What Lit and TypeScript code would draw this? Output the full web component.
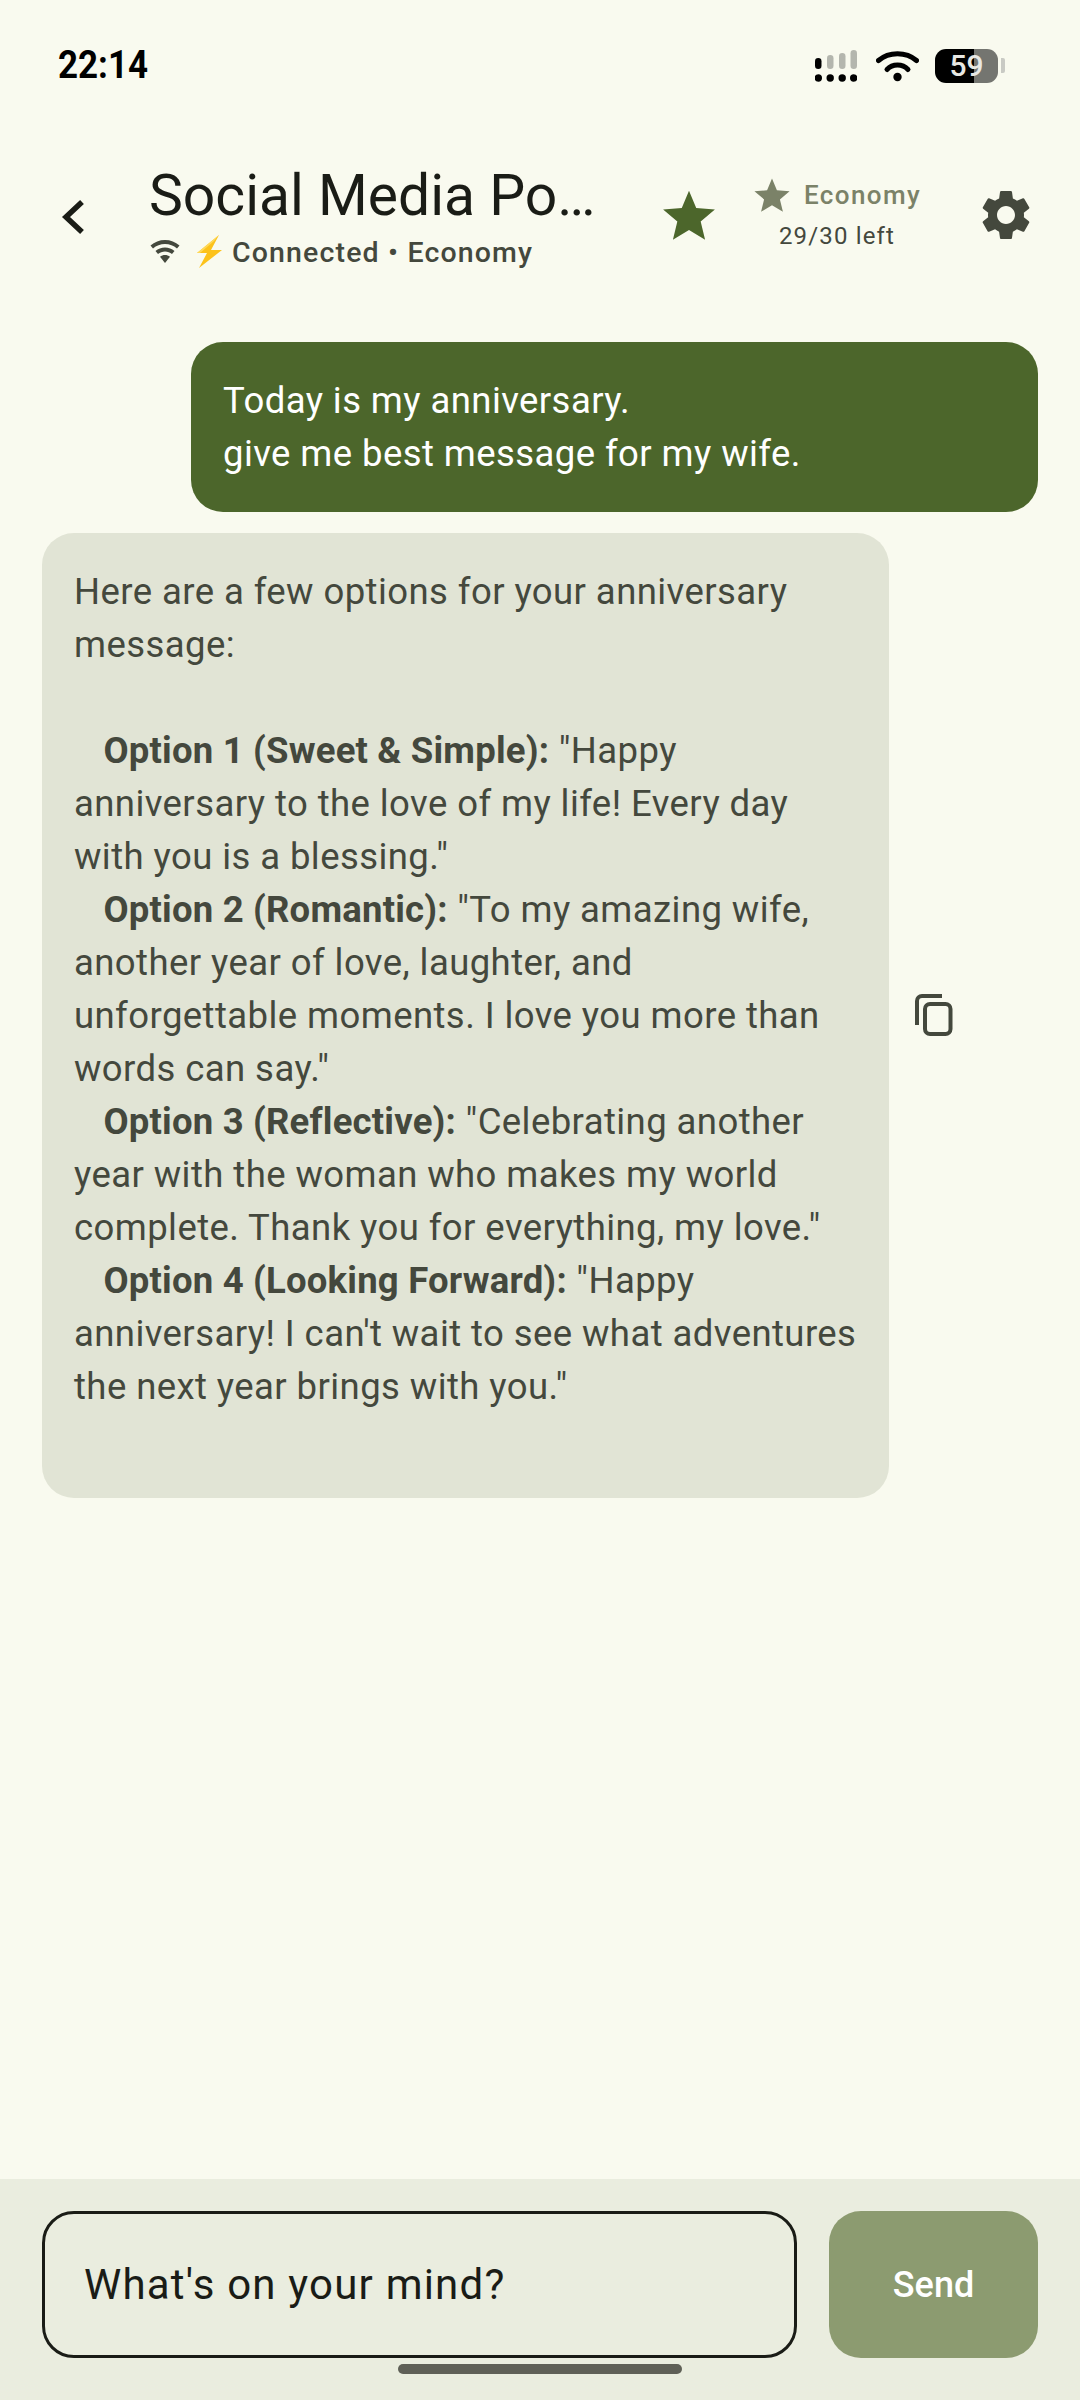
import { html, css, LitElement } from 'lit';
import { customElement, state } from 'lit/decorators.js';

const STAR = 'M12 1.600l3.100 7.400 8 .6-6.100 5.200 1.900 7.800L12 18.400 5.100 22.600 7 14.800.9 9.600l8-.6z';

@customElement('app-root')
export class AppRoot extends LitElement {
  static styles = css`
  :host {
    display: flex;
    flex-direction: column;
    width: 1080px;
    height: 2400px;
    background: #f9faef;
    color: #1a1c16;
    font-family: Roboto, "Liberation Sans", sans-serif;
    overflow: hidden;
  }

  .status {
    display: flex;
    align-items: center;
    height: 128px;
    padding: 0 75px 0 58px;
    box-sizing: border-box;
  }

  .time {
    padding-top: 2px;
    font-size: 38px;
    font-weight: 700;
    color: #000;
    transform: scaleX(.92);
    transform-origin: left center;
    flex: 1;
  }

  .status-icons { display: flex; align-items: center; margin-top: 3px; }
  .signal { width: 42px; height: 32px; margin-right: 19px; }
  .wifi { width: 43px; height: 32px; margin-right: 16px; }

  .battery {
    display: flex;
    align-items: center;
    justify-content: center;
    width: 63px;
    height: 34px;
    border-radius: 11px;
    background: linear-gradient(90deg, #000 0 39px, #747570 39px);
    color: #e8e8e4;
    font-size: 30px;
    font-weight: 500;
    margin-right: 3px;
  }

  .nub { width: 4px; height: 15px; border-radius: 0 2px 2px 0; background: #c9cac4; }

  .header {
    display: flex;
    align-items: center;
    height: 108px;
    margin-top: 33px;
    padding-left: 60px;
  }

  .back { width: 28px; height: 36px; margin: 3px 61px 0 0; }

  .titles { width: 453px; margin: 3px 59px 0 0; }

  .title {
    font-size: 57px;
    line-height: 68px;
    white-space: nowrap;
  }

  .subtitle {
    display: flex;
    align-items: center;
    height: 38px;
    margin-top: 3px;
    padding-left: 1px;
    color: #44483d;
    font-size: 28.5px;
    font-weight: 500;
    letter-spacing: 1.15px;
    white-space: nowrap;
  }

  .subtitle svg:first-child { width: 30px; height: 24px; margin-right: 16px; }
  .bolt { width: 28px; height: 34px; margin-right: 8px; }

  .big-star { width: 56px; height: 56px; margin-right: 35px; }

  .quota {
    display: flex;
    flex-direction: column;
    align-items: center;
    width: 170px;
    margin-right: 54px;
  }

  .tier {
    display: flex;
    align-items: center;
    gap: 13px;
    margin-top: -5px;
    color: #7b8268;
    font-size: 26px;
    font-weight: 500;
    letter-spacing: 1.4px;
  }

  .tier svg { width: 38px; height: 38px; }

  .left {
    margin-top: 8px;
    color: #44483d;
    font-size: 24px;
    font-weight: 400;
    letter-spacing: 1.15px;
  }

  .gear { width: 60px; height: 60px; }

  .messages {
    display: flex;
    flex-direction: column;
    flex: 1;
    gap: 21px;
    padding: 73px 42px 0;
    font-size: 36.5px;
    line-height: 53px;
    letter-spacing: .42px;
  }

  .bubble {
    width: 847px;
    box-sizing: border-box;
    padding: 32px;
    border-radius: 32px;
    white-space: pre-wrap;
  }

  .user {
    align-self: flex-end;
    background: #4c662b;
    color: #fff;
  }

  .reply { display: flex; align-items: center; gap: 26px; }

  .assistant {
    background: #e1e4d5;
    color: #44483d;
  }

  .copy { width: 38px; height: 42px; margin-top: -2px; }

  .composer {
    display: flex;
    gap: 32px;
    height: 221px;
    box-sizing: border-box;
    padding: 32px 42px 0;
    background: #eaeddf;
    position: relative;
  }

  .input {
    display: flex;
    align-items: center;
    width: 755px;
    height: 147px;
    box-sizing: border-box;
    padding-left: 39px;
    border: 3px solid #1a1c16;
    border-radius: 32px;
    font-size: 42px;
    letter-spacing: 1.2px;
  }

  .send {
    display: flex;
    align-items: center;
    justify-content: center;
    width: 209px;
    height: 147px;
    border-radius: 32px;
    background: #8c9b70;
    color: #fff;
    font-size: 36px;
    font-weight: 500;
  }

  .pill {
    position: absolute;
    left: 398px;
    top: 185px;
    width: 284px;
    height: 10px;
    border-radius: 5px;
    background: #5f6057;
  }

  b { font-weight: 700; letter-spacing: .2px; margin-left: 1px; }
  `;

  @state()
  private options = [
    ['Option 1 (Sweet & Simple):', ' "Happy anniversary to the love of my life! Every day with you is a blessing."'],
    ['Option 2 (Romantic):', ' "To my amazing wife, another year of love, laughter, and unforgettable moments. I love you more than words can say."'],
    ['Option 3 (Reflective):', ' "Celebrating another year with the woman who makes my world complete. Thank you for everything, my love."'],
    ['Option 4 (Looking Forward):', ' "Happy anniversary! I can\'t wait to see what adventures the next year brings with you."'],
  ];

  render() {
    return html`
      <div class="status">
        <div class="time">22:14</div>
        <div class="status-icons">
          <svg class="signal" viewBox="0 0 42 32">
            <g fill="#b4b6ae">
              <rect x="12" y="5" width="6.500" height="14" rx="3.250"/>
              <rect x="24" y="3" width="6.500" height="16" rx="3.250"/>
              <rect x="35.500" y="0" width="6.500" height="19" rx="3.250"/>
            </g>
            <g fill="#000">
              <rect x="0" y="8" width="6.500" height="11" rx="3.250"/>
              <circle cx="3.300" cy="28" r="3.700"/>
              <circle cx="15.200" cy="28" r="3.700"/>
              <circle cx="27.200" cy="28" r="3.700"/>
              <circle cx="38.700" cy="28" r="3.700"/>
            </g>
          </svg>
          <svg class="wifi" viewBox="0 0 43 32">
            <g fill="none" stroke="#000" stroke-width="5" stroke-linecap="round">
              <path d="M2.500 10.500C13 1.500 30 1.500 40.500 10.500"/>
              <path d="M11 19.500C16.500 13.500 26.500 13.500 32 19.500"/>
            </g>
            <circle cx="21.500" cy="27" r="4.200" fill="#000"/>
          </svg>
          <div class="battery">59</div>
          <div class="nub"></div>
        </div>
      </div>

      <div class="header">
        <svg class="back" viewBox="0 0 28 36">
          <path d="M22 3L6 18l16 15" fill="none" stroke="#1a1c16" stroke-width="5.500"/>
        </svg>
        <div class="titles">
          <div class="title">Social Media Po…</div>
          <div class="subtitle">
            <svg viewBox="0 0 30 24">
              <path d="M15 0C9.500 0 4.500 2 .5 5.500L3 8.500C6.300 5.600 10.500 4 15 4s8.700 1.600 12 4.500l2.500-3C25.500 2 20.500 0 15 0z" fill="#44483d"/>
              <path d="M15 7.500c-3.600 0-6.900 1.300-9.500 3.500L8 14c2-1.600 4.400-2.500 7-2.500s5 .9 7 2.500l2.500-3C21.900 8.800 18.600 7.500 15 7.500z" fill="#44483d"/>
              <path d="M15 15c-1.900 0-3.500.6-5 1.700L15 23l5-6.300C18.500 15.600 16.900 15 15 15z" fill="#44483d"/>
            </svg>
            <svg class="bolt" viewBox="0 0 28 34">
              <path d="M23 0L1 18h10L3 33l23-18H15z" fill="#fcc21b"/>
              <path d="M23 0L1 18h3L18 6z" fill="#ffd95a"/>
            </svg>
            <span>Connected • Economy</span>
          </div>
        </div>
        <svg class="big-star" viewBox="0 0 24 24"><path d="${STAR}" fill="#4c662b"/></svg>
        <div class="quota">
          <div class="tier">
            <svg viewBox="0 0 24 24"><path d="${STAR}" fill="#7b8268"/></svg>
            <span>Economy</span>
          </div>
          <div class="left">29/30 left</div>
        </div>
        <svg class="gear" viewBox="0 0 24 24">
          <path fill="#44483d" d="M19.140 12.940c.04-.3.060-.61.060-.94 0-.32-.020-.64-.070-.94l2.030-1.580a.49.49 0 0 0 .12-.61l-1.920-3.320a.488.488 0 0 0-.59-.22l-2.390.96c-.5-.38-1.030-.7-1.620-.94l-.36-2.540a.484.484 0 0 0-.48-.41h-3.840c-.24 0-.43.170-.47.41l-.36 2.540c-.59.24-1.130.57-1.620.94l-2.390-.96c-.22-.08-.47 0-.59.22L2.740 8.870c-.12.210-.08.470.12.610l2.030 1.580c-.05.3-.09.630-.09.940s.020.640.070.940l-2.030 1.580a.49.49 0 0 0-.12.610l1.920 3.320c.12.220.37.290.59.220l2.390-.96c.5.380 1.030.7 1.620.94l.36 2.540c.05.240.24.410.48.410h3.840c.24 0 .44-.170.47-.41l.36-2.540c.59-.24 1.130-.56 1.620-.94l2.390.96c.22.080.47 0 .59-.22l1.920-3.320c.12-.22.070-.47-.12-.61l-2.010-1.580zM12 15.600c-1.980 0-3.600-1.620-3.600-3.600s1.620-3.600 3.600-3.600 3.600 1.620 3.600 3.600-1.620 3.600-3.600 3.600z"/>
        </svg>
      </div>

      <div class="messages">
        <div class="bubble user">Today is my anniversary.
give me best message for my wife.</div>
        <div class="reply">
          <div class="bubble assistant">Here are a few options for your anniversary message:

${this.options.map(([head, rest]) => html`   <b>${head}</b>${rest}
`)}
</div>
          <svg class="copy" viewBox="0 0 38 42">
            <path d="M27 2H7a5 5 0 0 0-5 5v24" fill="none" stroke="#44483d" stroke-width="4"/>
            <rect x="10" y="10" width="25.500" height="30" rx="5" fill="none" stroke="#44483d" stroke-width="4"/>
          </svg>
        </div>
      </div>

      <div class="composer">
        <div class="input">What's on your mind?</div>
        <div class="send">Send</div>
        <div class="pill"></div>
      </div>
    `;
  }
}
